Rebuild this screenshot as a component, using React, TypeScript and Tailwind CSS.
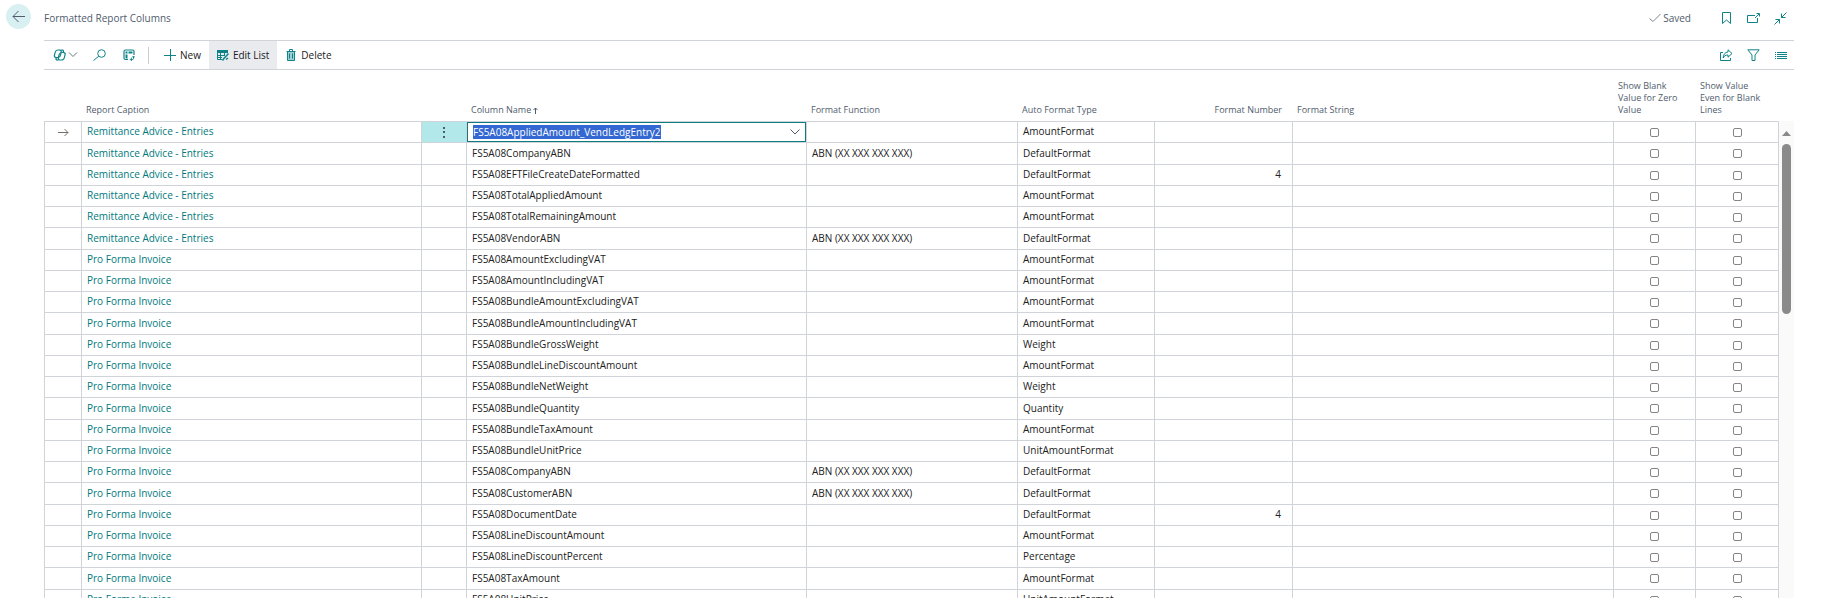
import { useEffect, useRef } from "react";
import type { ReactNode } from "react";

type Row = {
  caption: string;
  name: string;
  fn?: string;
  type: string;
  num?: number;
};

const ADVICE = "Remittance Advice - Entries";
const INVOICE = "Pro Forma Invoice";
const ABN = "ABN (XX XXX XXX XXX)";

const rows: Row[] = [
  { caption: ADVICE, name: "FS5A08AppliedAmount_VendLedgEntry2", type: "AmountFormat" },
  { caption: ADVICE, name: "FS5A08CompanyABN", fn: ABN, type: "DefaultFormat" },
  { caption: ADVICE, name: "FS5A08EFTFileCreateDateFormatted", type: "DefaultFormat", num: 4 },
  { caption: ADVICE, name: "FS5A08TotalAppliedAmount", type: "AmountFormat" },
  { caption: ADVICE, name: "FS5A08TotalRemainingAmount", type: "AmountFormat" },
  { caption: ADVICE, name: "FS5A08VendorABN", fn: ABN, type: "DefaultFormat" },
  { caption: INVOICE, name: "FS5A08AmountExcludingVAT", type: "AmountFormat" },
  { caption: INVOICE, name: "FS5A08AmountIncludingVAT", type: "AmountFormat" },
  { caption: INVOICE, name: "FS5A08BundleAmountExcludingVAT", type: "AmountFormat" },
  { caption: INVOICE, name: "FS5A08BundleAmountIncludingVAT", type: "AmountFormat" },
  { caption: INVOICE, name: "FS5A08BundleGrossWeight", type: "Weight" },
  { caption: INVOICE, name: "FS5A08BundleLineDiscountAmount", type: "AmountFormat" },
  { caption: INVOICE, name: "FS5A08BundleNetWeight", type: "Weight" },
  { caption: INVOICE, name: "FS5A08BundleQuantity", type: "Quantity" },
  { caption: INVOICE, name: "FS5A08BundleTaxAmount", type: "AmountFormat" },
  { caption: INVOICE, name: "FS5A08BundleUnitPrice", type: "UnitAmountFormat" },
  { caption: INVOICE, name: "FS5A08CompanyABN", fn: ABN, type: "DefaultFormat" },
  { caption: INVOICE, name: "FS5A08CustomerABN", fn: ABN, type: "DefaultFormat" },
  { caption: INVOICE, name: "FS5A08DocumentDate", type: "DefaultFormat", num: 4 },
  { caption: INVOICE, name: "FS5A08LineDiscountAmount", type: "AmountFormat" },
  { caption: INVOICE, name: "FS5A08LineDiscountPercent", type: "Percentage" },
  { caption: INVOICE, name: "FS5A08TaxAmount", type: "AmountFormat" },
  { caption: INVOICE, name: "FS5A08UnitPrice", type: "UnitAmountFormat" },
];

function Icon({ w = 14, h = 14, className = "", children }: { w?: number; h?: number; className?: string; children: ReactNode }) {
  return (
    <svg
      width={w}
      height={h}
      viewBox={`0 0 ${w} ${h}`}
      fill="none"
      stroke="currentColor"
      strokeWidth="1"
      aria-hidden="true"
      className={`shrink-0 ${className}`}
    >
      {children}
    </svg>
  );
}

function IconButton({ label, children }: { label: string; children: ReactNode }) {
  return (
    <button type="button" aria-label={label} className="flex h-full w-[27px] items-center justify-center text-[#0f8387]">
      {children}
    </button>
  );
}

function TitleBar() {
  return (
    <header className="flex h-10 shrink-0 items-center pr-[34px]">
      <div className="flex h-full w-11 shrink-0 items-start pt-1 pl-1.5">
        <button type="button" aria-label="Back" className="flex size-[25px] items-center justify-center rounded-full bg-[#d8f0f2] text-[#505c6d]">
          <Icon w={13} h={13}>
            <path d="M13 6.500H1M6.500 1L1 6.500 6.500 12" />
          </Icon>
        </button>
      </div>
      <h1 className="grow pb-1 text-[10px] leading-4 text-[#505c6d]">Formatted Report Columns</h1>
      <div className="flex h-full items-center pb-1">
        <span className="mr-[22px] flex items-center gap-0.5 text-[10px] leading-4 text-[#505c6d]">
          <Icon w={12} h={10} className="text-[#7d8694]">
            <path d="M.5 5.500l3.500 3L11.500 1" />
          </Icon>
          Saved
        </span>
        <IconButton label="Bookmark">
          <Icon w={9} h={12}>
            <path d="M.5.500h8v11L4.500 8l-4 3.500z" />
          </Icon>
        </IconButton>
        <IconButton label="Open in new window">
          <Icon w={13} h={11}>
            <path d="M8 2.500H.5v7h10V5M8 5l4-4M9.500.500h3v3" />
          </Icon>
        </IconButton>
        <IconButton label="Collapse">
          <Icon w={13} h={13}>
            <path d="M12.500.500L7.500 5.500M7.500 1.500v4h4M.5 12.500l5-5M1.500 7.500h4v4" />
          </Icon>
        </IconButton>
      </div>
    </header>
  );
}

function Toolbar() {
  return (
    <div className="mr-[34px] ml-11 flex h-[30px] shrink-0 items-center border-y border-[#d0d3d7] pl-[9px] text-[10px] leading-4 text-[#212121]">
      <button type="button" aria-label="Copilot" className="mr-1 flex h-full w-7 items-center gap-px text-[#0f8387]">
        <Icon w={14} h={12}>
          <g strokeWidth="1.200" transform="translate(2 0) skewX(-14)">
            <rect x="1" y="1" width="6" height="7.500" rx="2.200" />
            <rect x="5.500" y="3.500" width="6" height="7.500" rx="2.200" />
            <path d="M6 1h1.500c1.200 0 1.700.8 1.700 2.500M6.500 11H5c-1.200 0-1.700-.8-1.700-2.500" />
          </g>
        </Icon>
        <Icon w={10} h={6} className="text-[#6e7784]">
          <path d="M1 .5l4 4 4-4" />
        </Icon>
      </button>
      <button type="button" aria-label="Search" className="flex h-full w-[29px] items-center justify-center text-[#0f8387]">
        <Icon w={13} h={12}>
          <circle cx="8.500" cy="4.500" r="3.800" />
          <path d="M5.800 7.200L.5 11.500" />
        </Icon>
      </button>
      <button type="button" aria-label="Analyze" className="flex h-full w-[29px] items-center justify-center text-[#0f8387]">
        <Icon w={12} h={12}>
          <path d="M5 10.500H2.500c-1 0-1.500-.5-1.500-1.500V2.500C1 1.500 1.500 1 2.500 1h7c1 0 1.500.5 1.500 1.500V6" strokeWidth="1.200" />
          <path fill="currentColor" stroke="none" d="M2.500 2.500h2v2h-2zM5.500 2.500H9.500v2h-4zM2.500 5.500h2v4h-2z" />
          <path d="M10.500 7.500v2c0 .6-.4 1-1 1h-2M8.800 9L7.300 10.500 8.800 12M9 8.500L10.500 7 12 8.500" />
        </Icon>
      </button>
      <span className="mr-[7px] ml-[5px] h-[17px] w-px bg-[#c9cdd2]" />
      <button type="button" className="flex h-full items-center gap-1 px-2">
        <Icon w={12} h={12} className="text-[#0f8387]">
          <path d="M6.500 0v12M0 6.500h12" />
        </Icon>
        New
      </button>
      <button type="button" className="flex h-full items-center gap-1 bg-[#e9ebee] px-2">
        <Icon w={12} h={12} className="text-[#0f8387]">
          <path fill="currentColor" stroke="none" d="M0 1h11v3H0z" />
          <path d="M.5 4v6.500H5M0 6.500h8M0 8.500h5M3.500 4v6.500M7.500 4v2" />
          <path d="M11.500 4.500L6.500 10l-1 1.500M9 10.500L11 9" strokeWidth="1.500" />
        </Icon>
        Edit List
      </button>
      <button type="button" className="flex h-full items-center gap-1 px-2">
        <Icon w={12} h={12} className="text-[#0f8387]">
          <path d="M1.500 2.500h9M4.500 2.500v-2h3v2" />
          <path fill="#9ccfd1" d="M2.500 2.500h7v9h-7z" />
          <path d="M4.500 4.500v5M7.500 4.500v5" />
        </Icon>
        Delete
      </button>
      <div className="ml-auto flex h-full">
        <IconButton label="Share">
          <Icon w={13} h={12}>
            <path d="M3 3.500H.5v8h10V9M8 .8l4 3.700-4 3.700V6C5.500 6 4 7 3.200 9 3.200 5.500 5 3.200 8 3z" />
          </Icon>
        </IconButton>
        <IconButton label="Filter">
          <Icon w={13} h={12}>
            <path d="M.8.800h11.400L8 6v5.500H5V6z" />
          </Icon>
        </IconButton>
        <IconButton label="List view">
          <Icon w={12} h={12}>
            <path d="M0 3.500h1M2 3.500h10M0 5.500h1M2 5.500h10M0 7.500h1M2 7.500h10M0 9.500h1M2 9.500h10" />
          </Icon>
        </IconButton>
      </div>
    </div>
  );
}

function NameEditor({ value }: { value: string }) {
  const ref = useRef<HTMLInputElement>(null);
  useEffect(() => {
    ref.current?.focus();
    ref.current?.select();
  }, []);
  return (
    <div className="flex h-5 items-center border border-[#0c7c80] pr-[5px] pl-[5px]">
      <input
        ref={ref}
        aria-label="Column Name"
        defaultValue={value}
        className="h-[14px] min-w-0 grow leading-[14px] outline-none selection:bg-[#3367d1] selection:text-white"
      />
      <button type="button" aria-label="Choose a value" className="text-[#505c6d]">
        <Icon w={10} h={6}>
          <path d="M.5 .5L5 5 9.500 .5" />
        </Icon>
      </button>
    </div>
  );
}

function Check({ label }: { label: string }) {
  return (
    <input
      type="checkbox"
      aria-label={label}
      className="mx-auto block size-[9px] appearance-none rounded-[2px] border border-[#858585] bg-white"
    />
  );
}

const cell = "border-r border-b border-[#d0d3d7] p-0";
const text = "border-r border-b border-[#d0d3d7] pt-0 pb-0.5 pl-[5px]";
const head = "border-b border-[#d0d3d7] pt-0 pb-[5px] pl-1 align-bottom font-normal";

function ColumnsTable() {
  return (
    <table className="w-full table-fixed border-separate border-spacing-0 text-left text-[10px] leading-4 text-[#212121]">
      <colgroup>
        <col className="w-[38px]" />
        <col className="w-[340px]" />
        <col className="w-[45px]" />
        <col className="w-[340px]" />
        <col className="w-[211px]" />
        <col className="w-[137px]" />
        <col className="w-[138px]" />
        <col />
        <col className="w-[82px]" />
        <col className="w-[83px]" />
      </colgroup>
      <thead className="text-[9px] leading-3 text-[#505c6d]">
        <tr className="h-[52px]">
          <td className={head} />
          <th scope="col" className={head}>Report Caption</th>
          <td className={head} />
          <th scope="col" className={head}>
            <span className="flex items-center gap-0.5">
              Column Name
              <Icon w={5} h={7}>
                <path d="M2.500 7V1M.5 3L2.500 1l2 2" />
              </Icon>
            </span>
          </th>
          <th scope="col" className={head}>Format Function</th>
          <th scope="col" className={head}>Auto Format Type</th>
          <th scope="col" className={`${head} pr-[11px] text-right`}>Format Number</th>
          <th scope="col" className={head}>Format String</th>
          <th scope="col" className={head}>Show Blank<br />Value for Zero<br />Value</th>
          <th scope="col" className={head}>Show Value<br />Even for Blank<br />Lines</th>
        </tr>
      </thead>
      <tbody>
        {rows.map((r, i) => (
          <tr key={i} className="h-[21px] [&:nth-child(4n+2)]:h-[22px]">
            <td className={`${cell} border-l`}>
              {i === 0 && (
                <Icon w={11} h={9} className="mx-auto text-[#7a6f66]">
                  <path d="M0 4.500h10M6.500 1L10 4.500 6.500 8" />
                </Icon>
              )}
            </td>
            <td className={text}>
              <a href="#" className="text-[#00797d]">{r.caption}</a>
            </td>
            <td className={i === 0 ? `${cell} bg-[#b2e8ea]` : cell}>
              {i === 0 && (
                <button type="button" aria-label="Show more options" className="mx-auto block text-[#505c6d]">
                  <Icon w={2} h={12}>
                    <path fill="currentColor" stroke="none" d="M0 1h2v2H0zM0 5h2v2H0zM0 10h2v2H0z" />
                  </Icon>
                </button>
              )}
            </td>
            <td className={i === 0 ? cell : text}>{i === 0 ? <NameEditor value={r.name} /> : r.name}</td>
            <td className={text}>{r.fn}</td>
            <td className={text}>{r.type}</td>
            <td className={`${text} pr-[11px] text-right`}>{r.num}</td>
            <td className={cell} />
            <td className={cell}>
              <Check label={`Show blank value for zero value, ${r.name}`} />
            </td>
            <td className={cell}>
              <Check label={`Show value even for blank lines, ${r.name}`} />
            </td>
          </tr>
        ))}
      </tbody>
    </table>
  );
}

export default function App() {
  return (
    <div className="flex h-screen flex-col overflow-hidden bg-white font-['Open_Sans','Noto_Sans',sans-serif]">
      <TitleBar />
      <Toolbar />
      <main className="flex min-h-0 grow overflow-hidden pr-[34px] pl-11">
        <div className="min-w-0 grow">
          <ColumnsTable />
        </div>
        <div className="mt-[51px] flex w-[15px] shrink-0 flex-col items-center bg-[#fafafa] pt-2.5">
          <Icon w={9} h={5} className="text-[#8a8a8a]">
            <path fill="currentColor" stroke="none" d="M4.500 0L9 5H0z" />
          </Icon>
          <div className="mt-2 h-[170px] w-[9px] rounded-full bg-[#8a8a8a]" />
        </div>
      </main>
    </div>
  );
}
